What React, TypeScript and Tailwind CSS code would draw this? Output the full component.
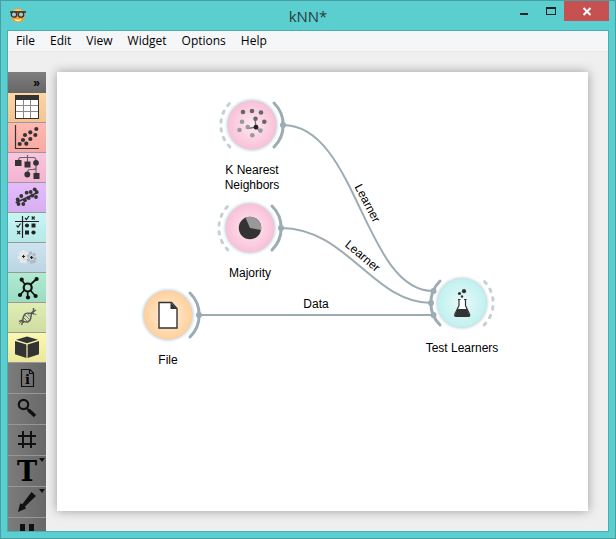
import type { ReactNode } from 'react';

const MENUS = ['File', 'Edit', 'View', 'Widget', 'Options', 'Help'];

type Tool = { name: string; tone: string; icon: ReactNode; more?: boolean };

const dots = (points: number[][], r: number) =>
  points.map(([x, y]) => <circle key={`${x}-${y}`} cx={x} cy={y} r={r} />);

const CATEGORIES: Tool[] = [
  {
    name: 'Data',
    tone: 'from-[#ffd5a3] to-[#f2c592]',
    icon: (
      <g fill="none" stroke="#8a8a8a">
        <rect x="7.5" y="2.5" width="23" height="23" fill="#fff" stroke="#333" />
        <path d="M8 12.5H30M8 18.5H30M15.5 7V25M22.5 7V25" />
        <path d="M7 2H31V7H7Z" fill="#333" stroke="none" />
      </g>
    ),
  },
  {
    name: 'Visualize',
    tone: 'from-[#ffb9b0] to-[#f7a9a2]',
    icon: (
      <g fill="#333">
        <path d="M7.5 2V25.5H31" fill="none" stroke="#333" strokeWidth="1.2" />
        {dots([[28.3, 6], [22.3, 9.3], [27.3, 12], [17, 12], [22.3, 16], [15, 17], [11.7, 21], [18.3, 20.7]], 2.1)}
      </g>
    ),
  },
  {
    name: 'Classify',
    tone: 'from-[#fac4de] to-[#f2b4d1]',
    icon: (
      <g fill="#333">
        <path d="M10.5 8Q10.5 4.5 13 4.5H25.5Q28 4.5 28 8M19.5 2V10M28 10V20M19.5 20Q19.5 16.5 22 16.5H25Q28 16.5 28 14" fill="none" stroke="#666" strokeWidth="1.2" />
        <path d="M7 7H13.5V13H7ZM16.5 8.5H22.5V14.5H16.5ZM25.5 20H31.5V26H25.5Z" />
        {dots([[28, 9.8], [19.3, 21.5]], 2.9)}
      </g>
    ),
  },
  {
    name: 'Regression',
    tone: 'from-[#e4bcfc] to-[#d7aef0]',
    icon: (
      <g fill="#333">
        <path d="M7.7 19.7L30.3 9.3" stroke="#333" strokeWidth="1.6" />
        {dots([[13.3, 13], [18.7, 9.7], [26.7, 6.3], [22.7, 9], [28.6, 9], [24.3, 12.7], [28, 14], [9.7, 16.5], [10.5, 21], [15.3, 21], [17, 17.3], [20.7, 15]], 1.9)}
      </g>
    ),
  },
  {
    name: 'Evaluate',
    tone: 'from-[#c8f5f4] to-[#b5e9e8]',
    icon: (
      <g fill="#222">
        <path d="M14.5 3V25M7 8.5H31" stroke="#222" strokeWidth="1.2" />
        <path d="M17 5L18.500 6.500L21 3M8.500 12.500L10 14L12.500 10.500M23.700 3.500L26.700 6.500M26.700 3.500L23.700 6.500M9.200 18L12.200 21M12.200 18L9.200 21" fill="none" stroke="#222" strokeWidth="1.2" />
        <path d="M23.5 10.5H27.5V14.5H23.5ZM17 17.5H21V21.5H17Z" />
        {dots([[19, 12.5], [25.5, 19.5]], 2.1)}
      </g>
    ),
  },
  {
    name: 'Unsupervised',
    tone: 'from-[#cce3f0] to-[#bdd4e2]',
    icon: (
      <g>
        <g fill="#e8e8e8">
          {dots([[15.5, 9], [12.5, 11], [18.5, 11], [11.5, 14.5], [15, 14], [19, 14.5], [13.5, 18], [17, 18.5]], 1.9)}
        </g>
        <g fill="#b3b8bb">
          {dots([[22.5, 10], [26, 11.5], [20.5, 13], [24, 14.5], [27, 15.5], [20.5, 17], [23.5, 19], [26, 18.5]], 1.7)}
        </g>
        <path d="M15.5 12V15M14 13.5H17M23.5 13V16M22 14.5H25" stroke="#222" />
      </g>
    ),
  },
  {
    name: 'Network',
    tone: 'from-[#b0ebd4] to-[#9cdbc2]',
    icon: (
      <g fill="#111">
        <path d="M13.7 7L17 11.5M28.5 6L22.5 11.5M12 22L16.5 17M27.5 23L22.5 17.5M19.7 18V24" stroke="#111" strokeWidth="1.7" />
        <circle cx="19.7" cy="14.5" r="4" fill="none" stroke="#111" strokeWidth="2.2" />
        {dots([[13.7, 6.7], [28.6, 6], [12, 22], [27.6, 23], [20, 24.5]], 2.1)}
      </g>
    ),
  },
  {
    name: 'Bioinformatics',
    tone: 'from-[#e0eeb3] to-[#cfdda2]',
    icon: (
      <g fill="none" stroke="#555">
        <path d="M11 18.5C15 16 16.500 20.500 20.500 18.500C24.500 16.500 22 12 24 9.500C25 8.500 26.500 8 28 7" strokeWidth="1.4" />
        <path d="M13.500 22C15.500 19 14 15 16.500 11.500C18.500 8.500 21.500 11.500 24.500 10C26 9 25.500 6.500 25.500 5" strokeWidth="1.4" />
        <path d="M17 12L22 17M19 10.500L23 14.500M15.500 14.500L19.500 18.500" stroke="#777" />
        <path d="M23 9.500L26 11M13 17L16 19.500" strokeWidth="1.4" />
        <path d="M26 11L28.500 11.500M11 21L13 19" stroke="#777" />
      </g>
    ),
  },
  {
    name: 'Prototypes',
    tone: 'from-[#fbf8b0] to-[#ece79b]',
    icon: (
      <g fill="#333">
        <path d="M19 3.5L30 6.7L19 10.3L8 6.7Z" />
        <path d="M7 8L18.4 11.6V25L7 21.3ZM31 8L19.6 11.6V25L31 21.3Z" />
      </g>
    ),
  },
];

const ACTIONS: Tool[] = [
  {
    name: 'Info',
    tone: '',
    icon: (
      <g>
        <path d="M13.5 6.5H22L25.5 10V23.5H13.5ZM21.5 6.5V10.5H25.5" fill="none" stroke="#111" strokeWidth="1.2" />
        <text x="19.5" y="21" textAnchor="middle" className="font-['DejaVu_Serif',serif] text-[13px] font-bold">i</text>
      </g>
    ),
  },
  {
    name: 'Find',
    tone: '',
    icon: (
      <g fill="none" stroke="#111">
        <circle cx="15.5" cy="10.5" r="4.7" strokeWidth="2.2" />
        <path d="M18.5 14L21 16.500" strokeWidth="2" />
        <path d="M20.500 16L27 22" strokeWidth="3.6" />
      </g>
    ),
  },
  {
    name: 'Grid',
    tone: '',
    icon: <path d="M15 6V23M23 6V23M10 11H28M10 19H28" stroke="#111" strokeWidth="2" />,
  },
  {
    name: 'Text',
    tone: '',
    more: true,
    icon: (
      <text x="19" y="25" textAnchor="middle" className="font-['DejaVu_Serif',serif] text-[27px] font-bold">T</text>
    ),
  },
  {
    name: 'Arrow',
    tone: '',
    more: true,
    icon: <path d="M23.500 5L28 9L17 19.500L18 21.500L10 25L12 16.500L14.500 17Z" fill="#111" />,
  },
  {
    name: 'Pause',
    tone: '',
    icon: <path d="M12 6H17V25H12ZM21 6H26V25H21Z" fill="#111" />,
  },
];

const LINK = '#9cacb4';

type NodeSpec = {
  id: string;
  lines: string[];
  x: number;
  y: number;
  left?: 'open' | 'linked';
  right?: 'open' | 'linked';
  anchors: number[][];
  glyph: ReactNode;
};

const NODES: NodeSpec[] = [
  {
    id: 'pink',
    lines: ['K Nearest', 'Neighbors'],
    x: 195,
    y: 53,
    left: 'open',
    right: 'linked',
    anchors: [[31, 0]],
    glyph: (
      <g>
        <path d="M4 2L3 -6M4 2L-4 3.5M4 2L8.5 7" stroke="#777" strokeWidth="1.3" />
        <g fill="#666">{dots([[-9, -13], [0, -14], [9, -12.5], [3.5, -6.3], [12.3, -3.3]], 2.3)}</g>
        <g fill="#999">{dots([[-10, -3.3], [-4.3, 2], [-12.5, 5], [8.5, 5.6], [0.3, 10.3]], 2.3)}</g>
        <circle cx="4" cy="2.2" r="2.4" fill="#222" />
      </g>
    ),
  },
  {
    id: 'pink',
    lines: ['Majority'],
    x: 193,
    y: 156,
    left: 'open',
    right: 'linked',
    anchors: [[31, 0]],
    glyph: (
      <g>
        <circle r="11.2" fill="#333" />
        <path d="M0 0L-4.5 -10.3A11.2 11.2 0 0 1 11 2Z" fill="#999" />
      </g>
    ),
  },
  {
    id: 'orange',
    lines: ['File'],
    x: 111,
    y: 243,
    right: 'linked',
    anchors: [[31, 0]],
    glyph: (
      <g>
        <path d="M-9 -12.5H3.5L9 -6.5V13H-9Z" fill="#fff" stroke="#333" strokeWidth="1.4" />
        <path d="M2.500 -12.5V-6H9Z" fill="#333" />
      </g>
    ),
  },
  {
    id: 'cyan',
    lines: ['Test Learners'],
    x: 405,
    y: 231,
    left: 'linked',
    right: 'open',
    anchors: [[-28.5, -12], [-31, 0], [-28.5, 12]],
    glyph: (
      <g fill="#333">
        <path d="M-3 -3.5V2.5L-7.3 11.5Q-7.5 13.3 -6 13.3H6.5Q8 13.3 7.6 11.5L3.5 2.5V-3.5" fill="#fff" stroke="#333" strokeWidth="1.2" />
        <path d="M-4.5 6H5L7.7 13.3H-7.5Z" />
        <path d="M-4 -3.5H-1.5M2 -3.5H4.5" stroke="#333" />
        <circle cx="-2.5" cy="-9.5" r="1.6" />
        <circle cx="2" cy="-11.8" r="2.1" />
        <circle cx="0" cy="-6.5" r="1.2" />
      </g>
    ),
  },
];

function Arc({ side, kind }: { side: 'left' | 'right'; kind: 'open' | 'linked' }) {
  const d = side === 'left' ? 'M-22 -22A31 31 0 0 0 -22 22' : 'M22 -22A31 31 0 0 1 22 22';
  return kind === 'linked' ? (
    <path d={d} fill="none" stroke={LINK} strokeWidth="3" strokeLinecap="round" />
  ) : (
    <path d={d} fill="none" stroke="#c6d0d4" strokeWidth="3" strokeLinecap="round" strokeDasharray="2.500 6.500" strokeDashoffset="-1" />
  );
}

function WidgetNode({ node }: { node: NodeSpec }) {
  return (
    <div
      className="absolute flex w-24 -translate-x-1/2 flex-col items-center"
      style={{ left: node.x, top: node.y - 36 }}
    >
      <svg viewBox="-36 -36 72 72" className="h-[72px] w-[72px] shrink-0">
        <circle r="28" fill="url(#halo)" />
        <circle r="24.3" fill={`url(#${node.id})`} />
        {node.left && <Arc side="left" kind={node.left} />}
        {node.right && <Arc side="right" kind={node.right} />}
        <g fill={LINK}>{dots(node.anchors, 3)}</g>
        {node.glyph}
      </svg>
      <div className="mt-0.5 text-center text-xs leading-[15px] whitespace-nowrap">
        {node.lines.map((line) => (
          <div key={line}>{line}</div>
        ))}
      </div>
    </div>
  );
}

function Links() {
  return (
    <svg width="531" height="439" className="absolute top-0 left-0">
      <defs>
        <radialGradient id="pink">
          <stop offset="0" stopColor="#fdeaf1" />
          <stop offset="1" stopColor="#f9c0d7" />
        </radialGradient>
        <radialGradient id="orange">
          <stop offset="0" stopColor="#fff0de" />
          <stop offset="1" stopColor="#ffd09c" />
        </radialGradient>
        <radialGradient id="cyan">
          <stop offset="0" stopColor="#e9fafa" />
          <stop offset="1" stopColor="#c0f1ef" />
        </radialGradient>
        <radialGradient id="halo">
          <stop offset="0.850" stopColor="#c3d2da" />
          <stop offset="1" stopColor="#e6edf0" stopOpacity="0" />
        </radialGradient>
      </defs>
      <g fill="none" stroke={LINK} strokeWidth="2">
        <path d="M226 53C300 53 307 219 376 219" />
        <path d="M224 156C290 156 316 231 374 231" />
        <path d="M142 243H376" />
      </g>
      <g textAnchor="middle" className="text-xs">
        <text x="259" y="236">Data</text>
        <text transform="translate(307 133) rotate(62)">Learner</text>
        <text transform="translate(303 187) rotate(40)">Learner</text>
      </g>
    </svg>
  );
}

function CategoryButton({ tool }: { tool: Tool }) {
  return (
    <button aria-label={tool.name} className={`h-[30px] w-full shrink-0 border-b border-[#999] bg-linear-to-b ${tool.tone}`}>
      <svg viewBox="0 0 38 29" className="h-[29px] w-full">{tool.icon}</svg>
    </button>
  );
}

function ActionButton({ tool }: { tool: Tool }) {
  return (
    <button aria-label={tool.name} className="h-[31px] w-full shrink-0 border-b border-[#969696] bg-linear-to-r from-[#7c7c7c] to-[#686868]">
      <svg viewBox="0 0 38 30" className="h-[30px] w-full">
        {tool.icon}
        {tool.more && <path d="M31 2H37L34 6Z" fill="#111" />}
      </svg>
    </button>
  );
}

export default function App() {
  return (
    <div className="flex h-screen flex-col border border-[#479fa1] bg-[#5bcfcf] px-1.5 pb-1.5 font-['Liberation_Sans',Arial,sans-serif] text-black">
      <header className="grid h-[29px] shrink-0 grid-cols-[1fr_auto_1fr] items-start">
        <svg viewBox="0 0 18 18" className="mt-1.5 ml-0.5 h-[18px] w-[18px]">
          <circle cx="9" cy="8.5" r="7" fill="#f5a02c" />
          <path d="M4 4Q9 0 14 4" fill="#fcc45c" />
          <path d="M1 5H17" stroke="#333" strokeWidth="1.6" />
          <circle cx="5" cy="7.5" r="2.7" fill="#a9c8d4" stroke="#333" strokeWidth="1.3" />
          <circle cx="12" cy="7.5" r="2.7" fill="#a9c8d4" stroke="#333" strokeWidth="1.3" />
          <path d="M6 12.5Q9 14.5 12 12.5" fill="none" stroke="#fff" strokeWidth="1.3" />
        </svg>
        <h1 className="pt-1 font-['Open_Sans',sans-serif] text-[15px] leading-[22px] text-[#2b3b3b]">kNN*</h1>
        <div className="flex h-5 justify-end">
          <button aria-label="Minimize" className="w-7">
            <svg viewBox="0 0 28 20" className="h-5 w-7"><path d="M12 12H20V14H12Z" fill="#222" /></svg>
          </button>
          <button aria-label="Maximize" className="w-7">
            <svg viewBox="0 0 28 20" className="h-5 w-7"><path d="M10 6H20V14H10ZM11 8V13H19V8Z" fill="#222" fillRule="evenodd" /></svg>
          </button>
          <button aria-label="Close" className="w-[45px] bg-[#c75050]">
            <svg viewBox="0 0 45 20" className="h-5 w-[45px]"><path d="M19.5 7L26.5 14M26.5 7L19.5 14" stroke="#fff" strokeWidth="2" /></svg>
          </button>
        </div>
      </header>

      <div className="flex min-h-0 flex-1 flex-col border border-[#49aeb0] bg-[#efefef]">
        <nav className="flex h-[21px] shrink-0 items-center gap-[15px] border-b border-[#e6e8eb] bg-[#f5f6f8] pl-2 font-['Open_Sans',sans-serif] text-xs">
          {MENUS.map((menu) => (
            <button key={menu}>{menu}</button>
          ))}
        </nav>

        <div className="flex min-h-0 flex-1 pt-5">
          <aside className="flex w-[38px] shrink-0 flex-col overflow-hidden">
            <button aria-label="Expand toolbox" className="h-[21px] w-full shrink-0 bg-linear-to-b from-[#7f7f7f] to-[#666] pr-1.5 text-right text-xs leading-5 font-bold">
              »
            </button>
            {CATEGORIES.map((tool) => (
              <CategoryButton key={tool.name} tool={tool} />
            ))}
            {ACTIONS.map((tool) => (
              <ActionButton key={tool.name} tool={tool} />
            ))}
          </aside>
          <main className="relative mr-5 mb-5 ml-[11px] flex-1 bg-white shadow-[0_0_10px_rgba(0,0,0,0.35)]">
            <Links />
            {NODES.map((node) => (
              <WidgetNode key={node.lines[0]} node={node} />
            ))}
          </main>
        </div>
      </div>
    </div>
  );
}
